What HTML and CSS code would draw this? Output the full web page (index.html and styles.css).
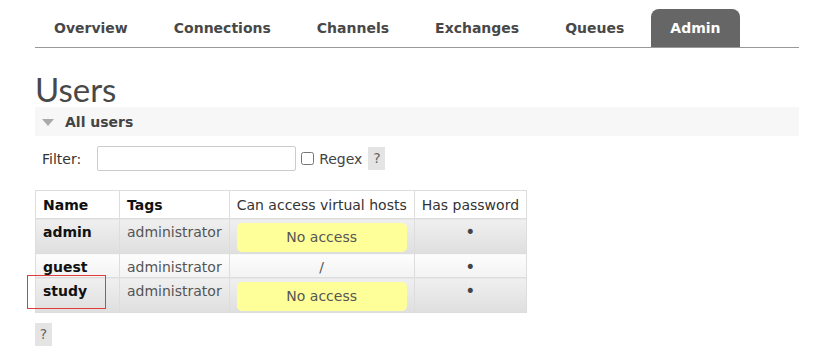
FILE: index.html
```html
<!DOCTYPE html>
<html lang="en">
<head>
<meta charset="utf-8">
<title>Users</title>
<link rel="stylesheet" href="styles.css">
</head>
<body>
<div class="page">
  <ul class="tabs">
    <li><a>Overview</a></li>
    <li><a>Connections</a></li>
    <li><a>Channels</a></li>
    <li><a>Exchanges</a></li>
    <li><a>Queues</a></li>
    <li class="active"><a>Admin</a></li>
  </ul>

  <h1 class="title">Users</h1>

  <div class="section-head"><span class="tri"></span>All users</div>

  <div class="filter">
    <label class="filter-label">Filter:</label>
    <input type="text" class="filter-input">
    <label class="regex"><input type="checkbox" class="regex-box">Regex</label>
    <span class="help">?</span>
  </div>

  <div class="table-wrap">
    <table class="list">
      <thead>
        <tr>
          <th class="col-name sortable">Name</th>
          <th class="sortable">Tags</th>
          <th>Can access virtual hosts</th>
          <th>Has password</th>
        </tr>
      </thead>
      <tbody>
        <tr class="alt1">
          <td class="name">admin</td>
          <td class="tags">administrator</td>
          <td class="access"><span class="warn">No access</span></td>
          <td class="pw">•</td>
        </tr>
        <tr class="alt2">
          <td class="name">guest</td>
          <td class="tags">administrator</td>
          <td class="access">/</td>
          <td class="pw">•</td>
        </tr>
        <tr class="alt1">
          <td class="name">study</td>
          <td class="tags">administrator</td>
          <td class="access"><span class="warn">No access</span></td>
          <td class="pw">•</td>
        </tr>
      </tbody>
    </table>
    <span class="highlight"></span>
  </div>

  <div class="bottom-help"><span class="help">?</span></div>
</div>
</body>
</html>
```

FILE: styles.css
```css
html, body {
  margin: 0;
  padding: 0;
  background: #fff;
}

body {
  font-family: "DejaVu Sans", Verdana, sans-serif;
  font-size: 14px;
  color: #444;
}

.page {
  width: 764px;
  padding-left: 35px;
}

/* tabs */
.tabs {
  display: flex;
  gap: 8px;
  margin: 0;
  padding: 9px 0 0 0;
  list-style: none;
  border-bottom: 1px solid #999;
}

.tabs li a {
  display: block;
  padding: 0 19px;
  height: 38px;
  line-height: 38px;
  font-weight: bold;
  color: #484848;
  border-radius: 8px 8px 0 0;
}

.tabs li.active a {
  background: #666;
  color: #fff;
}

/* heading */
.title {
  margin: 23px 0 0 0;
  font-family: Lato, "Open Sans", sans-serif;
  font-weight: normal;
  font-size: 33px;
  line-height: 36px;
  color: #484848;
}

.section-head {
  display: flex;
  align-items: center;
  height: 29px;
  padding-left: 7px;
  background: #f7f7f7;
  font-weight: bold;
  color: #444;
}

.tri {
  width: 0;
  height: 0;
  border-left: 6px solid transparent;
  border-right: 6px solid transparent;
  border-top: 7px solid #aaa;
  margin-right: 11px;
  margin-top: 1px;
}

/* filter */
.filter {
  display: flex;
  align-items: center;
  height: 25px;
  margin-top: 10px;
}

.filter-label {
  margin-left: 7px;
  color: #333;
}

.filter-input {
  box-sizing: border-box;
  width: 199px;
  height: 25px;
  margin: 0 0 0 16px;
  border: 1px solid #ccc;
  border-radius: 2px;
  padding: 2px 4px;
}

.regex {
  display: flex;
  align-items: center;
  color: #444;
}

.regex-box {
  width: 13px;
  height: 13px;
  margin: 0 5px 0 5px;
}

.help {
  display: inline-block;
  width: 17px;
  height: 23px;
  line-height: 23px;
  text-align: center;
  background: #e4e4e4;
  color: #666;
}

.filter .help {
  margin-left: 6px;
}

/* table */
.table-wrap {
  position: relative;
  margin-top: 19px;
  width: max-content;
}

.list {
  border-collapse: collapse;
  border: 1px solid #ddd;
}

.list th {
  padding: 5px 7px 4px;
  line-height: 18px;
  text-align: left;
  font-weight: normal;
  color: #333;
  background: #fff;
  border: 1px solid #ddd;
}

.list th.sortable {
  font-weight: bold;
  color: #111;
}

.list th.col-name {
  width: 69px;
}

.list td {
  padding: 4px 7px 1px;
  line-height: 18px;
  vertical-align: top;
  border: 1px solid #ddd;
}

.list tr.alt1 td {
  background: linear-gradient(#f0f0f0, #dfdfdf);
}

.list tr.alt2 td {
  background: linear-gradient(#fdfdfd, #f3f3f3);
}

.list td.name {
  font-weight: bold;
  color: #111;
}

.list td.tags {
  color: #555;
}

.list td.access,
.list td.pw {
  text-align: center;
  color: #555;
}

.list td.pw {
  font-size: 17px;
  color: #444;
}

.warn {
  display: block;
  padding: 5px 0;
  line-height: 19px;
  font-size: 14px;
  background: #ffff99;
  border-radius: 5px;
  color: #555;
}

.highlight {
  position: absolute;
  left: -8px;
  top: 85px;
  width: 79px;
  height: 34px;
  box-sizing: border-box;
  border: 1px solid #e23b3b;
  pointer-events: none;
}

.bottom-help {
  margin-top: 10px;
}
```
